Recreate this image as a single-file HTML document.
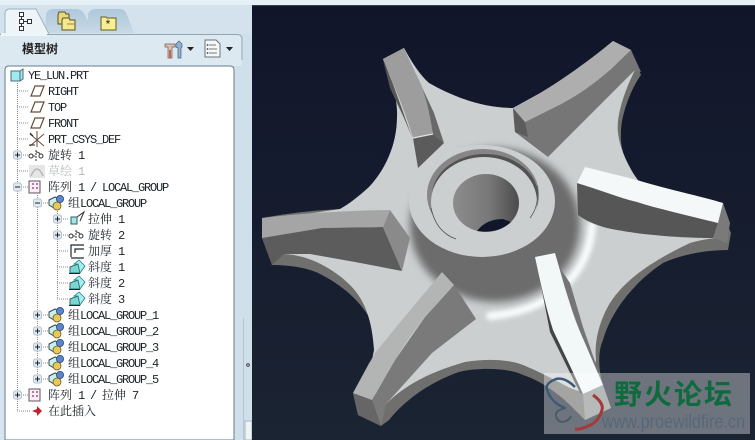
<!DOCTYPE html>
<html><head><meta charset="utf-8"><style>
html,body{margin:0;padding:0;width:755px;height:440px;overflow:hidden;background:#d8e6ef}
#s{position:absolute;left:0;top:0}
.t{position:absolute;white-space:pre;font:12px/16px "Noto Serif CJK SC","WenQuanYi Zen Hei","Noto Sans CJK SC",serif;color:#1c2228;height:16px}
.t i{font:normal 12px/16px "Liberation Mono",monospace;letter-spacing:-1.2px}
.g{color:#b4b8ba}
</style></head><body>
<svg id="s" width="755" height="440" viewBox="0 0 755 440" xmlns="http://www.w3.org/2000/svg">
<defs>
<linearGradient id="bg" x1="0" y1="0" x2="0" y2="1"><stop offset="0" stop-color="#11152a"/><stop offset="1" stop-color="#1b2433"/></linearGradient>
<linearGradient id="hole" x1="0" y1="0" x2="1" y2="0"><stop offset="0" stop-color="#8c8c8c"/><stop offset=".55" stop-color="#787878"/><stop offset="1" stop-color="#4b4b4b"/></linearGradient>
<linearGradient id="tab" x1="0" y1="0" x2="0" y2="1"><stop offset="0" stop-color="#aec8da"/><stop offset="1" stop-color="#c6d9e6"/></linearGradient>
<filter id="b5" x="-20%" y="-20%" width="140%" height="140%"><feGaussianBlur stdDeviation="4"/></filter>
<filter id="b3" x="-30%" y="-30%" width="160%" height="160%"><feGaussianBlur stdDeviation="2.5"/></filter>
<g id="pl"><path d="M-6,5 L-2,-5 H7 L3,5 Z" fill="#fff" stroke="#6b4a36" stroke-width="1.2"/></g>
<g id="ex"><rect x="-4" y="-4" width="8" height="8" rx="2" fill="#dfe9ef" stroke="#b3c4cf"/><path d="M-2.5,0H2.5M0,-2.5V2.5" stroke="#222" stroke-width="1"/></g>
<g id="co"><rect x="-4" y="-4" width="8" height="8" rx="2" fill="#dfe9ef" stroke="#b3c4cf"/><path d="M-2.5,0H2.5" stroke="#222" stroke-width="1"/></g>
<g id="grp"><path d="M-8,-3 L-2,-6 L3,-3 V2 L-3,5 L-8,2Z" fill="#cdeee8" stroke="#2f4a55"/><circle cx="3" cy="-4" r="3.6" fill="#5c86c8" stroke="#274a80" stroke-width=".8"/><circle cx="0" cy="3" r="4" fill="#e5c95c" stroke="#6d5b1e" stroke-width=".8"/></g>
<g id="pat"><rect x="-6" y="-6" width="11" height="12" fill="#fbeef6" stroke="#66505c"/><path d="M-3,-3h2M1,-3h2M-3,1h2M1,1h2" stroke="#a0508a" stroke-width="1.4"/></g>
<g id="rev"><circle cx="-5" cy="1" r="2" fill="none" stroke="#333"/><circle cx="5" cy="1" r="2" fill="none" stroke="#333"/><path d="M-3,1H0M0,-5V6" stroke="#333" stroke-dasharray="2 1"/><path d="M0,-3Q3,-3 4,-1" stroke="#333" fill="none"/></g>
<g id="dra"><path d="M-7,6 L-7,0 L1,-3 L3,6Z" fill="#7fd6d0" stroke="#1f6f77"/><path d="M-3,-3 L2,-7 L8,-1 L3,6 L1,-3Z" fill="#a5ecea" stroke="#1f7f88" stroke-width=".8"/><path d="M-8,6.500H3" stroke="#222"/></g>
</defs>

<!-- LEFT PANEL -->
<rect x="0" y="0" width="252" height="440" fill="#d0e0eb"/>
<rect x="0" y="0" width="755" height="5" fill="#e6f1f7"/>
<rect x="0" y="5" width="252" height="29" fill="#d3e2ec"/>
<path d="M45,33 L46,15 Q47,9 54,9 H76 Q82,9 85,15 L94,33Z" fill="url(#tab)"/>
<path d="M88,33 L88,15 Q89,9 96,9 H120 Q125,9 127,15 L134,33Z" fill="url(#tab)"/>
<path d="M0,34 H237 Q242,34 242,39 V66 H0Z" fill="#dde9f1"/>
<path d="M0,34.500 H237 Q242,34.500 242,39 V60" fill="none" stroke="#94a5b1"/>
<path d="M0,34 H5 V14 Q5,9 10,9 H36 L49,34" fill="#eef5f9" stroke="#9fb2bf"/>
<rect x="1" y="33" width="46" height="3" fill="#eef5f9"/>
<path d="M243.500,318V440" stroke="#b5c4ce"/>
<circle cx="248" cy="365" r="1.300" fill="#fff" stroke="#334"/>
<rect x="245" y="421" width="7" height="19" fill="#eef3f6" stroke="#a9b7c0"/>
<!-- tree box -->
<path d="M0,66 H5 V440 H0Z" fill="#d6e5ef"/>
<path d="M5,440 V70 Q5,66 9,66 H230 Q234,66 234,70 V440Z" fill="#fff" stroke="#647e8e"/>

<!-- tab icons -->
<g fill="#fff" stroke="#333" stroke-width="1"><rect x="19.500" y="12.500" width="4" height="4"/><rect x="19.500" y="19.500" width="4" height="4"/><rect x="27.500" y="19.500" width="4" height="4"/><rect x="19.500" y="26.500" width="4" height="4"/></g>
<path d="M21.500,17V19M21.500,24V26M24,21.500H27" stroke="#333"/>
<g stroke="#5e5320"><path d="M58,15 l1,-3h6l1,2h3v10h-11z" fill="#e9d77c"/><path d="M62,20 l1,-2h6l1,2h5v10h-13z" fill="#f5e88d"/><path d="M67,24h8" stroke="#9c8a34"/></g>
<path d="M101,17 h5l1,1h9v12h-15z" fill="#f7ef93" stroke="#6a5c22"/><text x="108" y="28" font-family="Liberation Sans" font-size="12" text-anchor="middle" fill="#222">*</text>

<!-- toolbar icons -->
<path d="M165,44 h10 v3 h-3 v11 h-4 v-11 h-3z" fill="#dcbfae" stroke="#6a5f5f" stroke-width=".7"/><path d="M170,50v8" stroke="#c9634a" stroke-width="2"/><path d="M176,44 l3,-3 l3,3 v3 l-1,1 v10 h-3 v-10 l-2,-1z" fill="#8fb2d2" stroke="#4c5f78" stroke-width=".7"/>
<path d="M187,47h7l-3.500,4z" fill="#222"/>
<path d="M205,40 h11 l4,4 v13 h-15z" fill="#f5f7f8" stroke="#6c7378"/><path d="M209,45h7M209,49h8M209,53h8" stroke="#777"/><circle cx="207.500" cy="45" r=".9" fill="#444"/><circle cx="207.500" cy="49" r=".9" fill="#444"/><circle cx="207.500" cy="53" r=".9" fill="#444"/>
<path d="M226,47h7l-3.500,4z" fill="#222"/>

<!-- tree lines -->
<g stroke="#8a8a8a" stroke-dasharray="1 1" fill="none">
<path d="M17.500,83V411 M37.500,195V379 M57.500,211V299"/>
<path d="M17,91H28M17,107H28M17,123H28M17,139H28M17,155H28M17,171H28M17,187H28M17,395H28M17,411H30"/>
<path d="M37,203H48M37,315H48M37,331H48M37,347H48M37,363H48M37,379H48"/>
<path d="M57,219H69M57,235H69M57,251H69M57,267H69M57,283H69M57,299H69"/>
</g>
<!-- root icon -->
<path d="M11,71 h9 l3,-2 v10 l-3,2 h-9z" fill="#9fe9ef" stroke="#4a6d78"/><path d="M20,71v10" stroke="#4a6d78"/>
<use href="#pl" x="37" y="91"/><use href="#pl" x="37" y="107"/><use href="#pl" x="37" y="123"/>
<g stroke="#6e4a3a" fill="none"><path d="M30,134 L44,146 M30,146 L44,134 M37,131 V147"/><path d="M30,133l3,3M29,145h6" stroke="#222"/></g>
<use href="#rev" x="36" y="155"/>
<path d="M29,178 V165 H45 V178Z" fill="#e6e6e6"/><path d="M31,176 Q37,162 43,176" fill="none" stroke="#b5b5b5" stroke-width="1.500"/>
<use href="#pat" x="35" y="187"/><use href="#pat" x="35" y="395"/>
<use href="#ex" x="17.500" y="155"/><use href="#co" x="17.500" y="187"/><use href="#ex" x="17.500" y="395"/>
<use href="#co" x="37.500" y="203"/><use href="#grp" x="57" y="203"/>
<use href="#ex" x="57.500" y="219"/><use href="#ex" x="57.500" y="235"/>
<path d="M71,217 h6 v7 h-6z" fill="#a6e6e0" stroke="#2f5f66"/><path d="M77,217 L84,212 L80,221" fill="none" stroke="#2d2d2d"/>
<use href="#rev" x="76" y="235"/>
<path d="M71,257 V245 H84 M84,258 H71 M75,253 V249 H84" fill="none" stroke="#1d2a33" stroke-width="1.200"/>
<use href="#dra" x="77" y="267"/><use href="#dra" x="77" y="283"/><use href="#dra" x="77" y="299"/>
<use href="#ex" x="37.500" y="315"/><use href="#ex" x="37.500" y="331"/><use href="#ex" x="37.500" y="347"/><use href="#ex" x="37.500" y="363"/><use href="#ex" x="37.500" y="379"/>
<use href="#grp" x="57" y="315"/><use href="#grp" x="57" y="331"/><use href="#grp" x="57" y="347"/><use href="#grp" x="57" y="363"/><use href="#grp" x="57" y="379"/>
<path d="M32,411 l5,-2 v-3 l5,5 l-5,5 v-3 l-5,-2z" fill="#c8202a"/>

<!-- VIEWPORT -->
<rect x="252" y="5" width="503" height="435" fill="url(#bg)"/>
<rect x="252" y="5" width="503" height="1" fill="#3a4046"/>
<!-- rim silhouette -->
<path d="M383,59 C392,80 398,100 397,117 C397,145 385,170 369,187 C358,197 349,204 340,209 Q300,211 262,218 L262,238 L272,265 C290,265 310,268 322,275 C345,287 365,305 374,327 C377,335 377,345 376,353 L369,363 L353,393 L358,415 L381,426 L389,420 C405,400 430,382 459,372 C478,367 510,368 523,375 C540,380 560,395 570,405 L585,420 L611,408 L603,385 C598,370 598,350 603,340 C610,315 630,285 663,263 C680,255 705,250 728,250 L731,233 L725,220 L723,203 C700,196 670,190 640,183 C628,170 620,150 621,135 C620,118 630,90 641,75 L631,50 L613,41 C590,60 550,90 513,108 C480,108 450,95 429,83 C420,75 412,63 404,48 Z" fill="#6f6f6e"/>
<!-- light top surface -->
<path d="M383,59 C392,80 398,100 397,117 C397,145 385,170 369,187 C358,197 349,204 340,209 L300,215 L380,230 L284,254 C310,255 335,270 350,285 C365,300 372,320 374,350 L372,360 L375,400 L386,404 C405,385 430,372 465,362 C490,358 510,360 523,365 C540,372 555,380 570,388 L590,395 L596,360 C594,340 600,320 610,303 C625,280 650,262 690,243 C700,240 708,239 715,238 L700,220 L640,183 C630,170 620,150 618,133 C616,115 625,90 635,70 L600,60 L513,108 C480,108 450,95 429,83 C420,75 412,63 404,48 Z" fill="#cbcfd0"/>
<!-- dish -->
<path d="M592,225 Q590,262 562,288 Q535,312 490,316" fill="none" stroke="#f8fcfd" stroke-width="8" stroke-linecap="round" filter="url(#b3)"/>
<ellipse cx="495" cy="225" rx="85" ry="77" fill="#6c6c6c" filter="url(#b5)"/>

<!-- blade A -->
<path d="M420,83 L434,113 L444,143 L433,134Z" fill="#686868"/>
<path d="M383,60 L393,84 L412,137 L404,118 L390,88Z" fill="#565656"/>
<path d="M413,138 L433,134 L444,143 L418,168Z" fill="#5b5b5b"/>
<path d="M383,59 L404,48 C410,62 415,72 419,80 C426,95 430,115 433,134 L413,138 C407,118 402,105 395,88 Z" fill="#9d9d9d"/>
<path d="M413,138 L433,134" stroke="#dfe3e3" stroke-width="1.200"/>
<!-- blade B -->
<path d="M513,108 L515,132 L548,157 L634,71 L641,72 L631,50 L610,70 L563,103 L525,122 Z" fill="#767676"/>
<path d="M513,108 L525,122 L528,137 L515,132 Z" fill="#5c5c5c"/>
<path d="M613,41 L631,50 L610,70 C595,83 580,94 563,103 L525,122 L513,108 C550,90 590,60 613,41Z" fill="#aeaeae"/>
<!-- blade C -->
<path d="M577,183 L578,215 C590,224 605,228 617,230 C650,236 690,238 713,238 L718,223 Z" fill="#565656"/>
<path d="M723,203 L730,223 L727,243 L713,238 L718,223 Z" fill="#7a7a7a"/>
<path d="M585,167 L577,183 C600,190 620,198 637,202 C655,208 690,216 718,223 L723,203 C700,196 670,190 637,180 Z" fill="#f4f8f9"/>
<!-- blade D -->
<path d="M556,262 L570,283 L583,327 L598,370 L603,385 L590,360 L572,310Z" fill="#757575"/>
<path d="M539,275 L546,300 L560,340 L583,394 L580,393 L550,332 Z" fill="#444"/>
<path d="M535,257 L555,253 L565,288 L575,320 L603,385 L583,394 C570,365 560,345 553,330 C545,305 540,280 535,257Z" fill="#f2f7f8"/>
<path d="M583,394 L603,385 L611,408 L585,420Z" fill="#8f9090"/>
<!-- blade E -->
<path d="M454,285 L476,319 L432,353 L386,404 L381,426 L372,400 L395,360 L425,317Z" fill="#7a7a7a"/>
<path d="M353,393 L372,400 L381,426 L358,415Z" fill="#666"/>
<path d="M442,272 L454,285 L425,317 C412,333 403,347 395,360 L372,400 L353,393 L375,353 L402,320Z" fill="#b3b5b5"/>
<!-- blade F -->
<path d="M262,238 L322,228 L383,227 L402,271 L355,262 L310,254 L284,254 L272,265 Z" fill="#5c5c5c"/>
<path d="M383,227 L390,210 L410,238 L402,271Z" fill="#8a8a8a"/>
<path d="M262,218 Q320,211 390,210 L383,227 L322,228 L262,238Z" fill="#a5a5a5"/>

<!-- hub -->
<ellipse cx="482" cy="201" rx="73" ry="56" fill="#cbcfd0"/>
<ellipse cx="483" cy="195" rx="56" ry="46" fill="#868686"/>
<ellipse cx="485" cy="196" rx="53" ry="42" fill="#525252"/>
<ellipse cx="484" cy="202" rx="53" ry="45" fill="#cbcfd0"/>
<path d="M537,185 Q540,205 530,218 M431,208 Q436,232 456,239" fill="none" stroke="#55585a" stroke-width=".8"/>
<ellipse cx="486" cy="203" rx="33" ry="29" fill="url(#hole)"/>
<path d="M477,231 Q486,219 503,219 L511,222 Q498,234 477,231Z" fill="#12162a"/>

<!-- watermark -->
<rect x="544" y="373" width="206" height="61" fill="#fff" fill-opacity=".37"/>
<path d="M575,387 Q565,377 556,379 Q543,384 548,392 Q552,403 565,408" fill="none" stroke="#3d5a75" stroke-width="2.500"/>
<path d="M593,395 Q604,403 602,410 Q598,423 588,426 Q580,430 575,429" fill="none" stroke="#a23a3a" stroke-width="3"/>
<path d="M566,408 Q555,410 556,416 Q558,424 566,421 Q570,419 571,416" fill="none" stroke="#4a5a68" stroke-width="2"/>
<text x="614" y="404" font-family="Noto Sans CJK SC,sans-serif" font-weight="700" font-size="28" textLength="118" lengthAdjust="spacing" fill="#0f6b3e">野火论坛</text>
<text x="602" y="428" font-family="Liberation Sans,sans-serif" font-size="19" textLength="143" lengthAdjust="spacingAndGlyphs" fill="#55687a">www.proewildfire.cn</text>
</svg>

<div class="t" style="left:22px;top:41px;font-weight:700;font-family:'Noto Sans CJK SC',sans-serif;color:#222">模型树</div>
<div class="t" style="left:28px;top:67px"><i>YE_LUN.PRT</i></div>
<div class="t" style="left:48px;top:83px"><i>RIGHT</i></div>
<div class="t" style="left:48px;top:99px"><i>TOP</i></div>
<div class="t" style="left:48px;top:115px"><i>FRONT</i></div>
<div class="t" style="left:48px;top:131px"><i>PRT_CSYS_DEF</i></div>
<div class="t" style="left:48px;top:147px">旋转<i> 1</i></div>
<div class="t g" style="left:48px;top:163px">草绘<i> 1</i></div>
<div class="t" style="left:48px;top:179px">阵列<i> 1 / LOCAL_GROUP</i></div>
<div class="t" style="left:68px;top:195px">组<i>LOCAL_GROUP</i></div>
<div class="t" style="left:88px;top:211px">拉伸<i> 1</i></div>
<div class="t" style="left:88px;top:227px">旋转<i> 2</i></div>
<div class="t" style="left:88px;top:243px">加厚<i> 1</i></div>
<div class="t" style="left:88px;top:259px">斜度<i> 1</i></div>
<div class="t" style="left:88px;top:275px">斜度<i> 2</i></div>
<div class="t" style="left:88px;top:291px">斜度<i> 3</i></div>
<div class="t" style="left:68px;top:307px">组<i>LOCAL_GROUP_1</i></div>
<div class="t" style="left:68px;top:323px">组<i>LOCAL_GROUP_2</i></div>
<div class="t" style="left:68px;top:339px">组<i>LOCAL_GROUP_3</i></div>
<div class="t" style="left:68px;top:355px">组<i>LOCAL_GROUP_4</i></div>
<div class="t" style="left:68px;top:371px">组<i>LOCAL_GROUP_5</i></div>
<div class="t" style="left:48px;top:387px">阵列<i> 1 / </i>拉伸<i> 7</i></div>
<div class="t" style="left:48px;top:403px">在此插入</div>
</body></html>
